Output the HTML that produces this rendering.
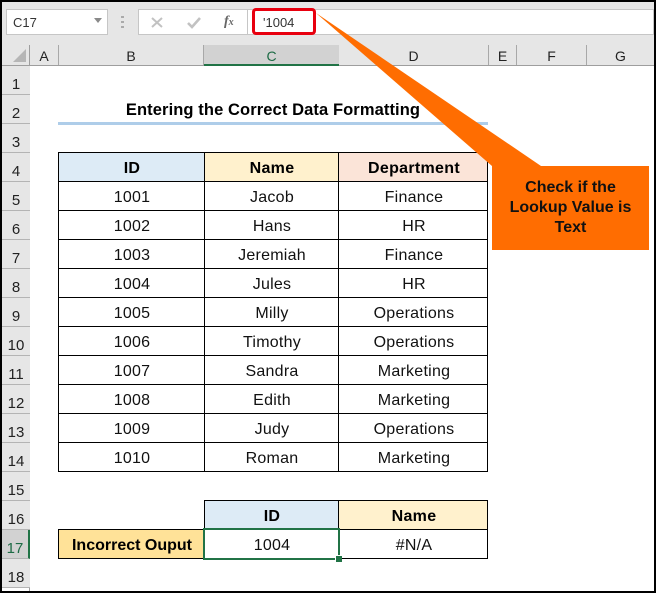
<!DOCTYPE html>
<html><head><meta charset="utf-8"><style>
html,body{margin:0;padding:0;background:#fff}
#p{position:relative;width:656px;height:593px;overflow:hidden;background:#fff;font-family:"Liberation Sans",sans-serif;color:#000}
#p div{position:absolute;box-sizing:border-box}
.t{text-align:center;white-space:nowrap}
.c{font-size:16px;color:#111;letter-spacing:.25px;height:29px;line-height:34px;padding-left:2px;text-align:center;white-space:nowrap}
.h{font-size:16px;font-weight:bold;letter-spacing:.3px;height:29px;line-height:33px;padding-left:2px;text-align:center;white-space:nowrap}
.ch{top:45px;height:20px;line-height:22px;font-size:14px;color:#222;text-align:center;border-right:1px solid #a8a8a8}
.rh{left:2px;width:28px;height:29px;background:#e6e6e6;border-bottom:1px solid #b4b4b4;font-size:15px;color:#222;text-align:center;line-height:38px}
.hl{background:#000;height:1px}.vl{background:#000;width:1px}
</style></head><body><div id="p">
<div style="left:0;top:0;width:656px;height:66px;background:#e6e6e6"></div>
<div style="left:6px;top:9px;width:102px;height:26px;background:#fff;border:1px solid #c6c6c6"></div>
<div style="left:13px;top:9px;height:26px;line-height:27px;font-size:13px;color:#333">C17</div>
<svg style="position:absolute;left:94px;top:18px" width="10" height="6"><path d="M0 0H8L4 5Z" fill="#8a8a8a"/></svg>
<svg style="position:absolute;left:121px;top:16px" width="4" height="12"><path d="M0 0h3v2H0zM0 5h3v2H0zM0 10h3v2H0z" fill="#aaa"/></svg>
<div style="left:138px;top:9px;width:110px;height:26px;background:#fff;border:1px solid #c6c6c6"></div>
<svg style="position:absolute;left:150px;top:16px" width="14" height="13"><path d="M2 2L12 11M12 2L2 11" stroke="#c2c2c2" stroke-width="2" fill="none"/></svg>
<svg style="position:absolute;left:186px;top:16px" width="16" height="14"><path d="M2 7L6 11L14 2" stroke="#c2c2c2" stroke-width="2.6" fill="none"/></svg>
<div style="left:224px;top:12px;font:italic bold 14px 'Liberation Serif',serif;color:#666;line-height:20px">f<span style="font-size:10px">x</span></div>
<div style="left:248px;top:9px;width:406px;height:26px;background:#fff;border:1px solid #c6c6c6;border-left:0"></div>
<div style="left:263px;top:9px;height:26px;line-height:27px;font-size:13px;color:#333">'1004</div>
<div style="left:252px;top:8px;width:64px;height:27px;border:3px solid #e8000f;border-radius:4px"></div>

<div style="left:2px;top:65px;width:652px;height:1px;background:#9e9e9e"></div>
<div style="left:29px;top:45px;width:1px;height:546px;background:#9e9e9e"></div>
<svg style="position:absolute;left:12px;top:48px" width="16" height="15"><path d="M14 1V14H1Z" fill="#b6b6b6"/></svg>
<div class="ch" style="left:30px;width:29px">A</div>
<div class="ch" style="left:59px;width:145px">B</div>
<div class="ch" style="left:204px;width:135px;background:#d2d2d2;color:#1d6b45;border-right:0;border-bottom:2px solid #217346;height:21px">C</div>
<div class="ch" style="left:339px;width:150px">D</div>
<div class="ch" style="left:489px;width:28px">E</div>
<div class="ch" style="left:517px;width:70px">F</div>
<div class="ch" style="left:587px;width:67px;border-right:0">G</div>

<div class="rh" style="top:66px;height:29px">1</div>
<div class="rh" style="top:95px">2</div>
<div class="rh" style="top:124px">3</div>
<div class="rh" style="top:153px">4</div>
<div class="rh" style="top:182px">5</div>
<div class="rh" style="top:211px">6</div>
<div class="rh" style="top:240px">7</div>
<div class="rh" style="top:269px">8</div>
<div class="rh" style="top:298px">9</div>
<div class="rh" style="top:327px">10</div>
<div class="rh" style="top:356px">11</div>
<div class="rh" style="top:385px">12</div>
<div class="rh" style="top:414px">13</div>
<div class="rh" style="top:443px">14</div>
<div class="rh" style="top:472px">15</div>
<div class="rh" style="top:501px">16</div>
<div class="rh" style="top:530px;background:#d2d2d2;color:#1d6b45;border-right:2px solid #217346;width:28px">17</div>
<div class="rh" style="top:559px">18</div>

<div class="t" style="left:58px;top:98px;width:430px;font-size:16.5px;font-weight:bold;line-height:24px;letter-spacing:.1px">Entering the Correct Data Formatting</div>
<div style="left:58px;top:122px;width:430px;height:3px;background:#aecde9"></div>

<div style="left:58px;top:152px;width:146px;height:29px;background:#ddebf6"></div>
<div style="left:204px;top:152px;width:134px;height:29px;background:#fff1cd"></div>
<div style="left:338px;top:152px;width:150px;height:29px;background:#fbe4d8"></div>
<div class="h" style="left:58px;top:152px;width:146px">ID</div>
<div class="h" style="left:204px;top:152px;width:134px">Name</div>
<div class="h" style="left:338px;top:152px;width:150px">Department</div>

<div class="c" style="left:58px;top:181px;width:146px">1001</div><div class="c" style="left:204px;top:181px;width:134px">Jacob</div><div class="c" style="left:338px;top:181px;width:150px">Finance</div>
<div class="c" style="left:58px;top:210px;width:146px">1002</div><div class="c" style="left:204px;top:210px;width:134px">Hans</div><div class="c" style="left:338px;top:210px;width:150px">HR</div>
<div class="c" style="left:58px;top:239px;width:146px">1003</div><div class="c" style="left:204px;top:239px;width:134px">Jeremiah</div><div class="c" style="left:338px;top:239px;width:150px">Finance</div>
<div class="c" style="left:58px;top:268px;width:146px">1004</div><div class="c" style="left:204px;top:268px;width:134px">Jules</div><div class="c" style="left:338px;top:268px;width:150px">HR</div>
<div class="c" style="left:58px;top:297px;width:146px">1005</div><div class="c" style="left:204px;top:297px;width:134px">Milly</div><div class="c" style="left:338px;top:297px;width:150px">Operations</div>
<div class="c" style="left:58px;top:326px;width:146px">1006</div><div class="c" style="left:204px;top:326px;width:134px">Timothy</div><div class="c" style="left:338px;top:326px;width:150px">Operations</div>
<div class="c" style="left:58px;top:355px;width:146px">1007</div><div class="c" style="left:204px;top:355px;width:134px">Sandra</div><div class="c" style="left:338px;top:355px;width:150px">Marketing</div>
<div class="c" style="left:58px;top:384px;width:146px">1008</div><div class="c" style="left:204px;top:384px;width:134px">Edith</div><div class="c" style="left:338px;top:384px;width:150px">Marketing</div>
<div class="c" style="left:58px;top:413px;width:146px">1009</div><div class="c" style="left:204px;top:413px;width:134px">Judy</div><div class="c" style="left:338px;top:413px;width:150px">Operations</div>
<div class="c" style="left:58px;top:442px;width:146px">1010</div><div class="c" style="left:204px;top:442px;width:134px">Roman</div><div class="c" style="left:338px;top:442px;width:150px">Marketing</div>

<div class="hl" style="left:58px;top:152px;width:430px"></div>
<div class="hl" style="left:58px;top:181px;width:430px"></div>
<div class="hl" style="left:58px;top:210px;width:430px"></div>
<div class="hl" style="left:58px;top:239px;width:430px"></div>
<div class="hl" style="left:58px;top:268px;width:430px"></div>
<div class="hl" style="left:58px;top:297px;width:430px"></div>
<div class="hl" style="left:58px;top:326px;width:430px"></div>
<div class="hl" style="left:58px;top:355px;width:430px"></div>
<div class="hl" style="left:58px;top:384px;width:430px"></div>
<div class="hl" style="left:58px;top:413px;width:430px"></div>
<div class="hl" style="left:58px;top:442px;width:430px"></div>
<div class="hl" style="left:58px;top:471px;width:430px"></div>
<div class="vl" style="left:58px;top:152px;height:320px"></div>
<div class="vl" style="left:204px;top:152px;height:320px"></div>
<div class="vl" style="left:338px;top:152px;height:320px"></div>
<div class="vl" style="left:487px;top:152px;height:320px"></div>

<div style="left:204px;top:500px;width:134px;height:29px;background:#ddebf6"></div>
<div style="left:338px;top:500px;width:150px;height:29px;background:#fff1cd"></div>
<div style="left:58px;top:529px;width:146px;height:29px;background:#ffe298"></div>
<div class="h" style="left:204px;top:500px;width:134px">ID</div>
<div class="h" style="left:338px;top:500px;width:150px">Name</div>
<div class="h" style="left:58px;top:529px;width:146px;letter-spacing:0">Incorrect Ouput</div>
<div class="c" style="left:204px;top:529px;width:134px">1004</div>
<div class="c" style="left:338px;top:529px;width:150px">#N/A</div>
<div class="hl" style="left:204px;top:500px;width:284px"></div>
<div class="hl" style="left:58px;top:529px;width:430px"></div>
<div class="hl" style="left:58px;top:558px;width:430px"></div>
<div class="vl" style="left:58px;top:529px;height:30px"></div>
<div class="vl" style="left:204px;top:500px;height:59px"></div>
<div class="vl" style="left:338px;top:500px;height:59px"></div>
<div class="vl" style="left:487px;top:500px;height:59px"></div>
<div style="left:203px;top:528px;width:137px;height:32px;border:2px solid #217346"></div>
<div style="left:335px;top:555px;width:7px;height:7px;background:#217346;border:1px solid #fff;border-right:0;border-bottom:0"></div>

<svg style="position:absolute;left:0;top:0" width="656" height="593"><path d="M316 13L541 166H492Z" fill="#ff6d01"/></svg>
<div style="left:492px;top:166px;width:157px;height:84px;background:#ff6d01"></div>
<div style="left:492px;top:178px;width:157px;font-size:16px;font-weight:bold;line-height:20px;text-align:center;color:#111;white-space:nowrap">Check if the<br>Lookup Value is<br>Text</div>

<div style="left:0;top:0;width:656px;height:2px;background:#000"></div>
<div style="left:0;top:591px;width:656px;height:2px;background:#000"></div>
<div style="left:0;top:0;width:2px;height:593px;background:#000"></div>
<div style="left:654px;top:0;width:2px;height:593px;background:#000"></div>
</div></body></html>
